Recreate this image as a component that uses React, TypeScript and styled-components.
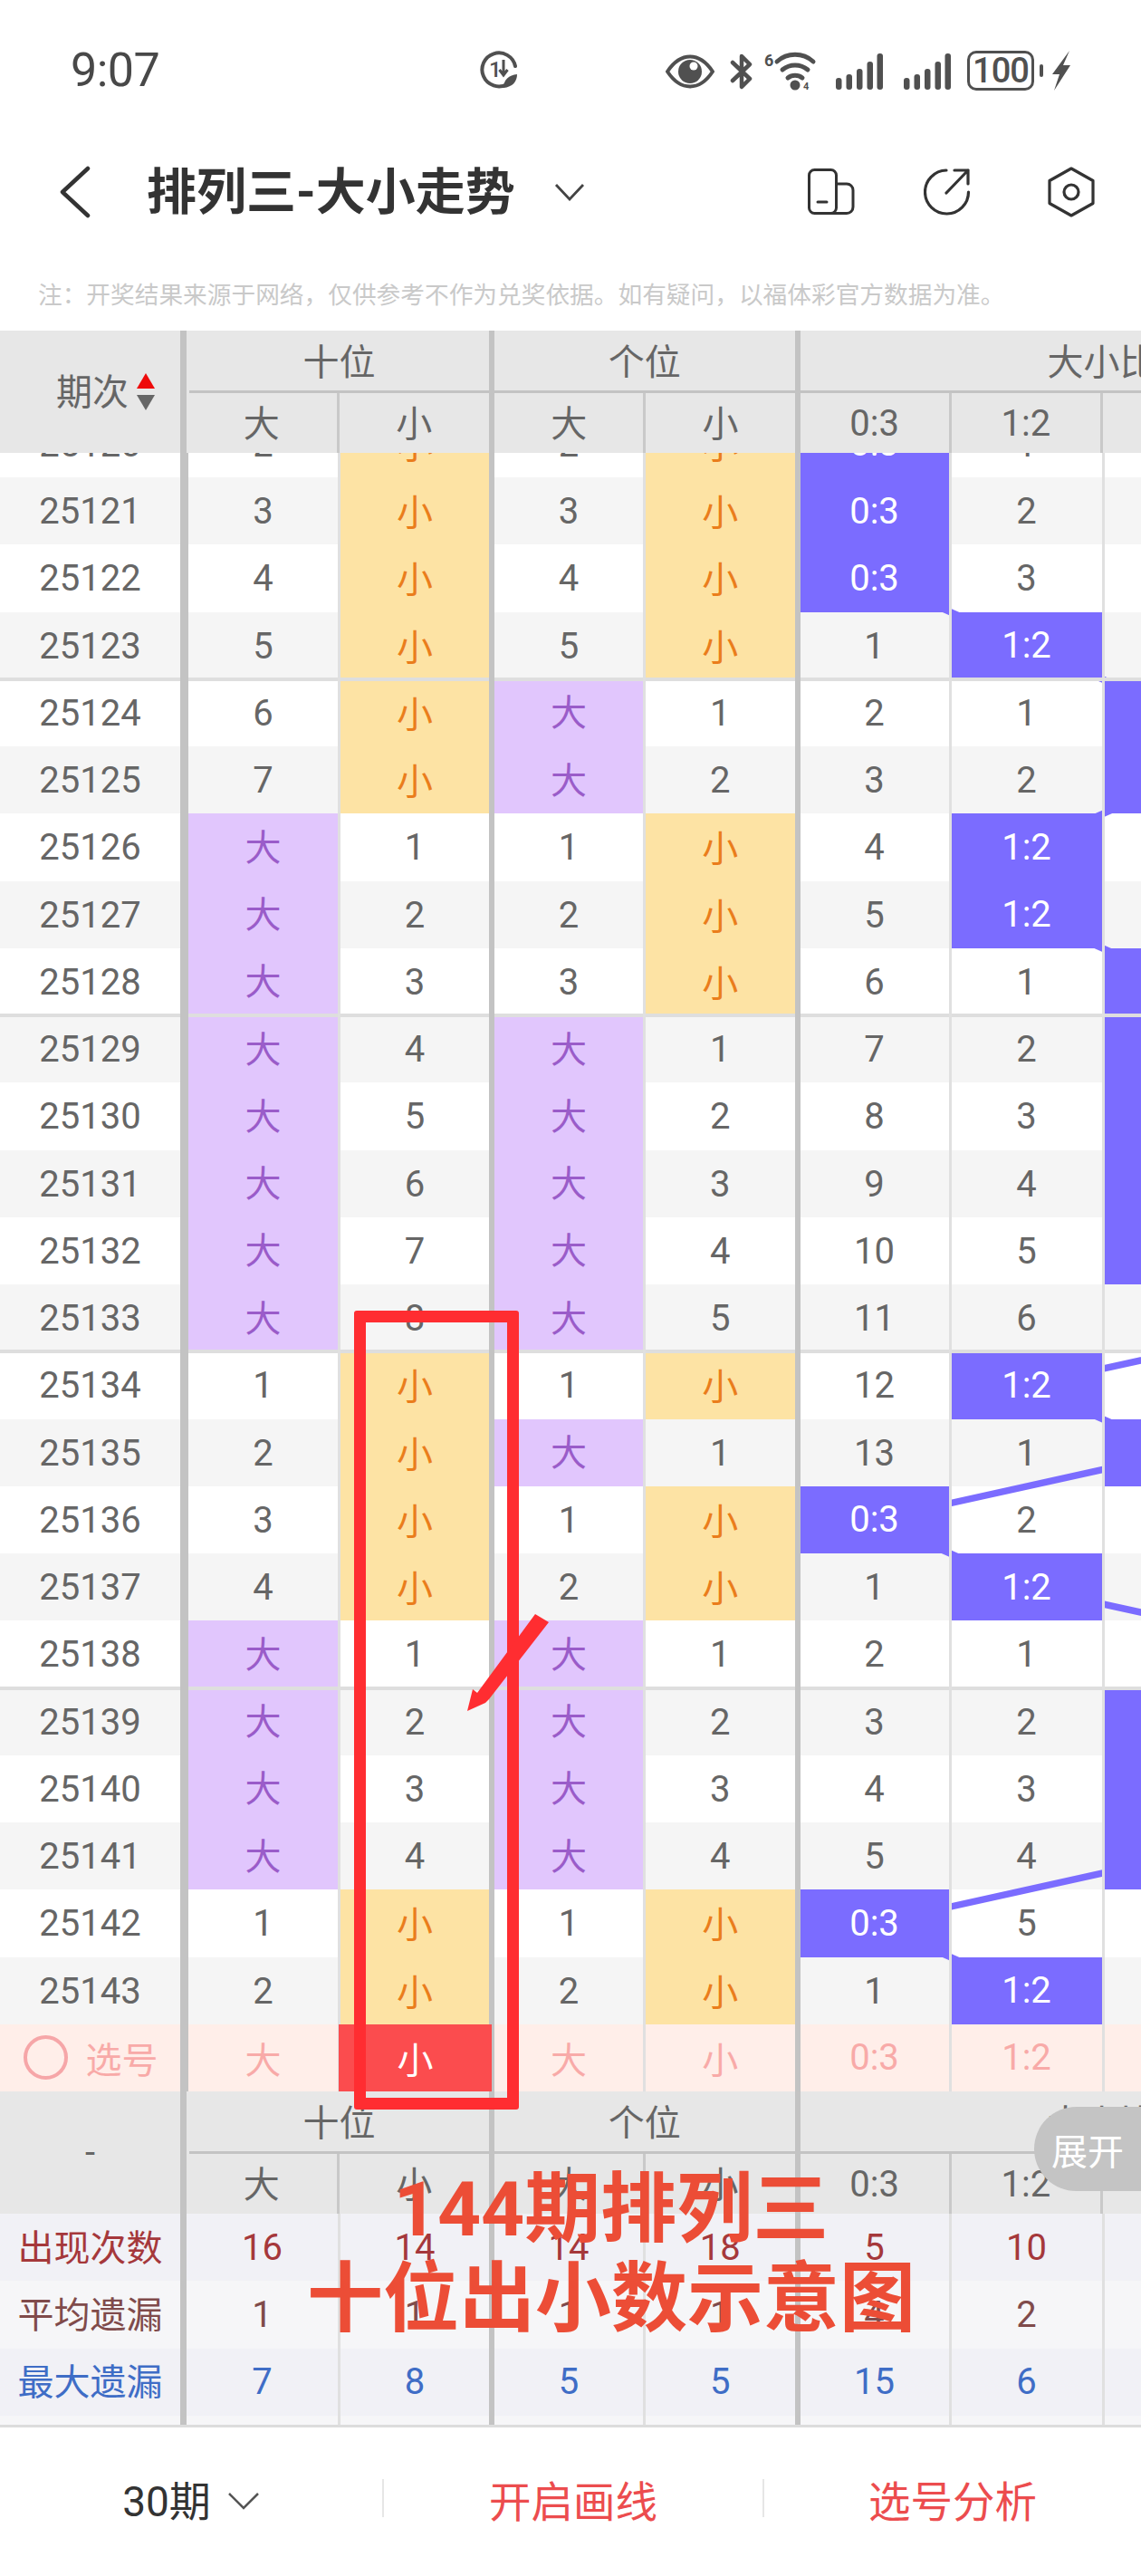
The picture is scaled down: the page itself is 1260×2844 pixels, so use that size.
import React from 'react';
import styled, { createGlobalStyle, css } from 'styled-components';

const GlobalStyle = createGlobalStyle`
  html, body { margin: 0; padding: 0; background: #fff; }
  body { font-family: Roboto, "Noto Sans CJK SC", sans-serif; }
  * { box-sizing: border-box; }
`;

const ROW_H = 74.25;
const BODY_COLS = '208px 168px 170px 167px 170.5px 167px 169px 169px 169px';
const STAT_COLS = '206px 170px 170px 167px 170.5px 167px 169px 169px 169px';
const THICK = '#c3c3c3';
const THIN_HEAD = '#c9c9c9';
const THIN_BODY = '#e0e0e0';
const HEAD_BG = '#e7e7e7';
const RATIO_X = [965.5, 1133.5, 1302, 1471];

const Page = styled.div`
  position: relative;
  width: 1260px;
  height: 2844px;
  overflow: hidden;
  background: #fff;
  display: flex;
  flex-direction: column;
`;

/* ---------- status bar ---------- */
const StatusBar = styled.div`
  height: 130px;
  flex: none;
  padding: 56px 0 0 78px;
  display: flex;
  align-items: flex-start;
  color: #505050;
`;
const Time = styled.div`
  width: 102px;
  font-size: 52px;
  line-height: 44px;
  letter-spacing: -0.5px;
  color: #484848;
`;
const CenterGlyph = styled.div`
  margin-left: 350px;
  width: 42px;
  height: 42px;
`;
const StatusRight = styled.div`
  margin-left: 163px;
  display: flex;
  align-items: flex-start;
`;
const StatusSvg = styled.svg<{ $ml?: number; $mt?: number }>`
  display: block;
  flex: none;
  margin-left: ${(p) => p.$ml ?? 0}px;
  margin-top: ${(p) => p.$mt ?? 0}px;
`;
const Battery = styled.div`
  margin-left: 18px;
  width: 74px;
  height: 44px;
  border: 3.5px solid #505050;
  border-radius: 10px;
  display: flex;
  align-items: center;
  justify-content: center;
  font-size: 38px;
  font-weight: 500;
  letter-spacing: -1px;
  color: #505050;
`;
const BatteryNub = styled.div`
  margin: 15px 0 0 6px;
  width: 4px;
  height: 14px;
  border-radius: 2px;
  background: #505050;
`;

/* ---------- nav bar ---------- */
const NavBar = styled.div`
  height: 160px;
  flex: none;
  display: flex;
  align-items: center;
  padding: 4px 0 0 66px;
`;
const NavTitle = styled.div`
  margin-left: 62px;
  font-size: 55px;
  font-weight: 700;
  line-height: 70px;
  color: #333;
  white-space: nowrap;
`;
const NavSvg = styled.svg<{ $ml: number }>`
  display: block;
  flex: none;
  margin-left: ${(p) => p.$ml}px;
`;

const Note = styled.div`
  height: 75px;
  flex: none;
  padding-left: 42px;
  font-size: 26.7px;
  line-height: 72px;
  color: #c9c9c9;
  white-space: nowrap;
`;

/* ---------- column headers (used above and below the rows) ---------- */
const HeadBand = styled.div`
  height: 135px;
  flex: none;
  display: flex;
  background: ${HEAD_BG};
  color: #666;
  font-size: 40px;
`;
const HeadLabel = styled.div<{ $centered?: boolean }>`
  flex: none;
  width: 206px;
  border-right: 7px solid ${THICK};
  display: flex;
  align-items: center;
  justify-content: ${(p) => (p.$centered ? 'center' : 'flex-start')};
  padding-left: ${(p) => (p.$centered ? 0 : 62)}px;
  padding-bottom: ${(p) => (p.$centered ? 0 : 6)}px;
  gap: 9px;
`;
const SortIcon = styled.svg`
  display: block;
  margin-top: 6px;
`;
const Group = styled.div<{ $w: number }>`
  flex: none;
  width: ${(p) => p.$w}px;
  border-right: 6.5px solid ${THICK};
  display: flex;
  flex-direction: column;
`;
const GroupTitle = styled.div<{ $inset?: boolean }>`
  height: 69px;
  flex: none;
  display: flex;
  align-items: center;
  justify-content: center;
  padding-bottom: 3px;
  border-bottom: 3.5px solid ${THICK};
  margin-left: ${(p) => (p.$inset ? 3 : 0)}px;
`;
const SubRow = styled.div`
  flex: 1;
  display: flex;
`;
const SubCell = styled.div<{ $cjk?: boolean }>`
  flex: 1;
  display: flex;
  align-items: center;
  justify-content: center;
  padding-bottom: ${(p) => (p.$cjk ? 5 : 0)}px;
  border-right: 3px solid ${THIN_HEAD};
  &:last-child { border-right: 0; }
`;

/* ---------- rows ---------- */
const Viewport = styled.div`
  flex: none;
  height: 1809px;
  overflow: hidden;
  display: flex;
  flex-direction: column;
  justify-content: flex-end;
`;
const RowsArea = styled.div`
  position: relative;
  flex: none;
`;
const TrendSvg = styled.svg`
  position: absolute;
  left: 0;
  top: 0;
  z-index: 1;
`;
const Row = styled.div<{ $gray?: boolean; $select?: boolean }>`
  display: grid;
  grid-template-columns: ${BODY_COLS};
  height: ${ROW_H}px;
  background: ${(p) => (p.$select ? '#ffeee9' : p.$gray ? '#f5f5f5' : '#fff')};
`;
type Tone = 'plain' | 'big' | 'small' | 'ratio' | 'pick' | 'picked';
const toneStyles: Record<Tone, ReturnType<typeof css>> = {
  plain: css`color: #666; padding-top: 1px;`,
  big: css`background: #e1c6fd; color: #9a5cc9; padding-bottom: 5px;`,
  small: css`background: #fde3a4; color: #ea7d1c; padding-bottom: 2px;`,
  ratio: css`background: #7b6cff; color: #fff;`,
  pick: css`color: #f8aaa8;`,
  picked: css`background: #fb4c4e; color: #fff; margin-left: -2px; border-right-width: 3px;`,
};
const Cell = styled.div<{ $tone: Tone; $div: number; $divColor: string; $sep?: boolean }>`
  position: relative;
  z-index: ${(p) => (p.$sep ? 3 : 2)};
  display: flex;
  align-items: center;
  justify-content: center;
  font-size: 40px;
  font-weight: 400;
  background-clip: padding-box;
  border-right: ${(p) => p.$div}px solid ${(p) => p.$divColor};
  ${(p) => toneStyles[p.$tone]}
  ${(p) =>
    p.$sep &&
    css`
      &::after {
        content: '';
        position: absolute;
        left: 0;
        right: 0;
        bottom: -2px;
        height: 4px;
        background: #dedede;
      }
    `}
`;
const PickLabel = styled.div`
  display: flex;
  align-items: center;
  gap: 20px;
  margin-left: 1px;
  color: #f8aaa8;
`;
const PickCircle = styled.span`
  display: block;
  width: 49px;
  height: 49px;
  border: 4px solid #f6a6a8;
  border-radius: 50%;
`;

/* ---------- statistics ---------- */
const StatsBlock = styled.div`
  flex: none;
  border-bottom: 3px solid #dcdcdc;
`;
const StatRow = styled.div<{ $bg: string; $h: number; $color: string }>`
  display: grid;
  grid-template-columns: ${STAT_COLS};
  height: ${(p) => p.$h}px;
  background: ${(p) => p.$bg};
  color: ${(p) => p.$color};
  font-size: 40px;
`;
const StatCell = styled.div<{ $div: number; $divColor: string; $cjk?: boolean }>`
  display: flex;
  align-items: center;
  justify-content: center;
  padding-bottom: ${(p) => (p.$cjk ? 5 : 0)}px;
  border-right: ${(p) => p.$div}px solid ${(p) => p.$divColor};
`;

/* ---------- bottom bar ---------- */
const BottomBar = styled.div`
  flex: 1;
  display: grid;
  grid-template-columns: 422px 420px 418px;
  align-items: center;
  padding-bottom: 8px;
  font-size: 46.5px;
`;
const BarItem = styled.div<{ $red?: boolean; $line?: boolean }>`
  height: 42px;
  display: flex;
  align-items: center;
  justify-content: center;
  color: ${(p) => (p.$red ? '#ec4c4e' : '#333')};
  border-left: ${(p) => (p.$line ? '2px solid #e6e6e6' : '0')};
  gap: 18px;
`;
const PeriodText = styled.span`
  font-size: 46px;
`;
const PeriodChevron = styled.svg`
  margin-top: 6px;
`;

/* ---------- overlays ---------- */
const ExpandPill = styled.div`
  position: absolute;
  right: 0;
  top: 2326px;
  width: 118px;
  height: 93px;
  border-radius: 47px 0 0 47px;
  background: #c4c4c4;
  color: #fff;
  font-size: 40px;
  display: flex;
  align-items: center;
  padding-left: 19px;
  z-index: 5;
`;
const RedFrame = styled.div`
  position: absolute;
  left: 391px;
  top: 1447px;
  width: 182px;
  height: 882px;
  border: 13px solid #ff2d31;
  border-radius: 3px;
  z-index: 6;
`;
const RedArrow = styled.svg`
  position: absolute;
  left: 510px;
  top: 1778px;
  z-index: 7;
`;
const Caption = styled.div`
  position: absolute;
  left: 275px;
  top: 2390px;
  width: 800px;
  text-align: center;
  font-size: 84px;
  line-height: 99px;
  font-weight: 700;
  color: #ec4d36;
  z-index: 8;
`;

/* ---------- data ---------- */
type BS = 'B' | 'S';
const tens = 'SSSSSSBBBBBBBBSSSSBBBBSS'.split('') as BS[];
const ones = 'SSSSBBSSSBBBBBSBSSBBBBSS'.split('') as BS[];
const ratio = [0, 0, 0, 1, 2, 2, 1, 1, 2, 2, 2, 2, 2, 3, 1, 2, 0, 1, 3, 2, 2, 2, 0, 1];
const RATIO_LABEL = ['0:3', '1:2', '2:1', '3:0'];

const missSeries = (hit: boolean[], start: number) => {
  let n = start;
  return hit.map((h) => {
    if (h) {
      n = 0;
      return 0;
    }
    n += 1;
    return n;
  });
};

const tenBig = missSeries(tens.map((x) => x === 'B'), 1);
const tenSmall = missSeries(tens.map((x) => x === 'S'), 0);
const oneBig = missSeries(ones.map((x) => x === 'B'), 1);
const oneSmall = missSeries(ones.map((x) => x === 'S'), 0);
const ratioMiss = [0, 1, 2, 3].map((c) => missSeries(ratio.map((r) => r === c), 0));

const COL_DIV: Array<[number, string]> = [
  [3, THIN_BODY],
  [6, THICK],
  [3, THIN_BODY],
  [6.5, THICK],
  [3, THIN_BODY],
  [3, THIN_BODY],
  [3, THIN_BODY],
  [3, THIN_BODY],
];

const stats = [
  { label: '出现次数', color: '#a5383b', bg: '#f1f1f6', values: ['16', '14', '14', '18', '5', '10', '', ''] },
  { label: '平均遗漏', color: '#804b4b', bg: '#f6f6f8', values: ['1', '1', '1', '1', '4', '2', '', ''] },
  { label: '最大遗漏', color: '#3f6dc6', bg: '#f1f1f6', values: ['7', '8', '5', '5', '15', '6', '', ''] },
];

const Header: React.FC<{ label: React.ReactNode; centered?: boolean }> = ({ label, centered }) => (
  <HeadBand>
    <HeadLabel $centered={centered}>{label}</HeadLabel>
    <Group $w={340}>
      <GroupTitle $inset>十位</GroupTitle>
      <SubRow>
        <SubCell $cjk>大</SubCell>
        <SubCell $cjk>小</SubCell>
      </SubRow>
    </Group>
    <Group $w={337.5}>
      <GroupTitle>个位</GroupTitle>
      <SubRow>
        <SubCell $cjk>大</SubCell>
        <SubCell $cjk>小</SubCell>
      </SubRow>
    </Group>
    <Group $w={672}>
      <GroupTitle>大小比</GroupTitle>
      <SubRow>
        {RATIO_LABEL.map((l) => (
          <SubCell key={l}>{l}</SubCell>
        ))}
      </SubRow>
    </Group>
  </HeadBand>
);

export default function App() {
  const linePoints = ratio
    .map((r, i) => `${RATIO_X[r]},${i * ROW_H + ROW_H / 2}`)
    .join(' ');

  return (
    <Page>
      <GlobalStyle />
      <StatusBar>
        <Time>9:07</Time>
        <CenterGlyph>
          <svg width="42" height="42" viewBox="0 0 42 42" fill="none">
            <path d="M30 37 A18.500 18.500 0 1 1 39 17" stroke="#505050" strokeWidth="4" strokeLinecap="round" />
            <text x="10" y="29" fontSize="24" fontWeight="500" fill="#505050" fontFamily="Roboto">1</text>
            <path d="M26 10 V26 M21.500 21 L26 27 L30.500 21" stroke="#505050" strokeWidth="3" />
            <path d="M26 41 C26 32 32 27 41 26 C41 34 36 40 26 41Z" fill="#505050" />
          </svg>
        </CenterGlyph>
        <StatusRight>
          <StatusSvg width="54" height="38" viewBox="0 0 54 38" $mt={4} fill="none">
            <path d="M2 19 C10 7 18 2.500 27 2.500 C36 2.500 44 7 52 19 C44 31 36 35.500 27 35.500 C18 35.500 10 31 2 19Z" stroke="#505050" strokeWidth="4" />
            <circle cx="27" cy="19" r="13" fill="#505050" />
            <circle cx="31" cy="13" r="4.500" fill="#fff" />
          </StatusSvg>
          <StatusSvg width="26" height="42" viewBox="0 0 26 42" $ml={17} $mt={2} fill="none">
            <path d="M3 11 L22 29 L13 38 L13 4 L22 13 L3 31" stroke="#505050" strokeWidth="4.500" strokeLinejoin="round" strokeLinecap="round" />
          </StatusSvg>
          <StatusSvg width="58" height="44" viewBox="0 0 58 44" $ml={12} fill="none">
            <text x="0" y="17" fontSize="18" fontWeight="700" fill="#505050" fontFamily="Roboto">6</text>
            <path d="M14 12 A30 30 0 0 1 54 12" stroke="#505050" strokeWidth="5" strokeLinecap="round" />
            <path d="M20 21 A22 22 0 0 1 48 21" stroke="#505050" strokeWidth="5" strokeLinecap="round" />
            <path d="M26 30 A13 13 0 0 1 42 30" stroke="#505050" strokeWidth="5" strokeLinecap="round" />
            <circle cx="34" cy="38" r="5.500" fill="#505050" />
            <text x="43" y="43" fontSize="11" fontWeight="700" fill="#505050" fontFamily="Roboto">4</text>
          </StatusSvg>
          {[21, 23].map((ml) => (
            <StatusSvg key={ml} width="52" height="42" viewBox="0 0 52 42" $ml={ml} $mt={2} fill="#505050">
              <rect x="0" y="28" width="6.500" height="13" rx="3" />
              <rect x="11.500" y="24" width="6.500" height="17" rx="3" />
              <rect x="23" y="18" width="6.500" height="23" rx="3" />
              <rect x="34.500" y="10" width="6.500" height="31" rx="3" />
              <rect x="45.500" y="1" width="6.500" height="40" rx="3" />
            </StatusSvg>
          ))}
          <Battery>100</Battery>
          <BatteryNub />
          <StatusSvg width="20" height="44" viewBox="0 0 20 44" $ml={10} fill="#505050">
            <path d="M19 0 L0 26 H8 L2 44 L20 16 H12 Z" />
          </StatusSvg>
        </StatusRight>
      </StatusBar>

      <NavBar>
        <svg width="34" height="58" viewBox="0 0 34 58" fill="none">
          <path d="M31 3 L3 29 L31 55" stroke="#333" strokeWidth="4.500" strokeLinecap="round" strokeLinejoin="round" />
        </svg>
        <NavTitle>排列三-大小走势</NavTitle>
        <NavSvg width="34" height="20" viewBox="0 0 34 20" $ml={43.5} fill="none">
          <path d="M2 2 L17 18 L32 2" stroke="#444" strokeWidth="2.800" />
        </NavSvg>
        <NavSvg width="52" height="52" viewBox="0 0 52 52" $ml={246} fill="none" stroke="#333" strokeWidth="3">
          <rect x="1.500" y="1.500" width="30" height="48" rx="6" />
          <path d="M31.500 17 H43 A7 7 0 0 1 50 24 V42.500 A7 7 0 0 1 43 49.500 H25" />
          <path d="M11 37 H21" strokeLinecap="round" />
        </NavSvg>
        <NavSvg width="52" height="52" viewBox="0 0 52 52" $ml={76} fill="none" stroke="#333" strokeWidth="3.200" strokeLinecap="round" strokeLinejoin="round">
          <path d="M25 2 A24 24 0 1 0 49.500 26" />
          <path d="M25 27 L49 2 M34 2 H49 V17" />
        </NavSvg>
        <NavSvg width="52" height="56" viewBox="0 0 52 56" $ml={85} fill="none" stroke="#333" strokeWidth="3.200" strokeLinejoin="round">
          <path d="M26 2 L50 15.500 V40.500 L26 54 L2 40.500 V15.500 Z" />
          <circle cx="26" cy="28" r="8" />
        </NavSvg>
      </NavBar>

      <Note>注：开奖结果来源于网络，仅供参考不作为兑奖依据。如有疑问，以福体彩官方数据为准。</Note>

      <Header
        label={
          <>
            期次
            <SortIcon width="20" height="42" viewBox="0 0 20 42">
              <path d="M10 0 L20 17 H0 Z" fill="#ee0a0a" />
              <path d="M0 24 H20 L10 41 Z" fill="#666" />
            </SortIcon>
          </>
        }
      />

      <Viewport>
        <RowsArea>
          <TrendSvg width="1600" height={ratio.length * ROW_H} viewBox={`0 0 1600 ${ratio.length * ROW_H}`} fill="none">
            <polyline points={linePoints} stroke="#7b6cff" strokeWidth="7.5" />
          </TrendSvg>
          {ratio.map((r, i) => {
            const issue = 25120 + i;
            const sep = i < ratio.length - 1 && (issue - 25123) % 5 === 0;
            const gray = issue % 2 === 1;
            const cells: Array<{ text: string | number; tone: Tone }> = [
              tens[i] === 'B' ? { text: '大', tone: 'big' } : { text: tenBig[i], tone: 'plain' },
              tens[i] === 'S' ? { text: '小', tone: 'small' } : { text: tenSmall[i], tone: 'plain' },
              ones[i] === 'B' ? { text: '大', tone: 'big' } : { text: oneBig[i], tone: 'plain' },
              ones[i] === 'S' ? { text: '小', tone: 'small' } : { text: oneSmall[i], tone: 'plain' },
              ...RATIO_LABEL.map((l, c) =>
                r === c ? { text: l, tone: 'ratio' as Tone } : { text: ratioMiss[c][i], tone: 'plain' as Tone }
              ),
            ];
            return (
              <Row key={issue} $gray={gray}>
                <Cell $tone="plain" $div={9} $divColor={THICK} $sep={sep}>{issue}</Cell>
                {cells.map((c, k) => (
                  <Cell key={k} $tone={c.tone} $div={COL_DIV[k][0]} $divColor={COL_DIV[k][1]} $sep={sep}>
                    {c.text}
                  </Cell>
                ))}
              </Row>
            );
          })}
          <Row $select>
            <Cell $tone="pick" $div={9} $divColor={THICK}>
              <PickLabel>
                <PickCircle />
                选号
              </PickLabel>
            </Cell>
            {['大', '小', '大', '小', ...RATIO_LABEL].map((t, k) => (
              <Cell key={k} $tone={k === 1 ? 'picked' : 'pick'} $div={COL_DIV[k][0]} $divColor={COL_DIV[k][1]}>
                {t}
              </Cell>
            ))}
          </Row>
        </RowsArea>
      </Viewport>

      <StatsBlock>
        <Header label="-" centered />
        {stats.map((s) => (
          <StatRow key={s.label} $bg={s.bg} $h={ROW_H} $color={s.color}>
            <StatCell $div={7} $divColor={THICK} $cjk>{s.label}</StatCell>
            {s.values.map((v, k) => (
              <StatCell key={k} $div={COL_DIV[k][0]} $divColor={COL_DIV[k][1]}>{v}</StatCell>
            ))}
          </StatRow>
        ))}
        <StatRow $bg="#f6f6f8" $h={10.25} $color="#666">
          <StatCell $div={7} $divColor={THICK} />
          {COL_DIV.map((d, k) => (
            <StatCell key={k} $div={d[0]} $divColor={d[1]} />
          ))}
        </StatRow>
      </StatsBlock>

      <BottomBar>
        <BarItem>
          <PeriodText>30期</PeriodText>
          <PeriodChevron width="36" height="20" viewBox="0 0 36 20" fill="none">
            <path d="M2 2 L18 18 L34 2" stroke="#555" strokeWidth="2.500" />
          </PeriodChevron>
        </BarItem>
        <BarItem $red $line>开启画线</BarItem>
        <BarItem $red $line>选号分析</BarItem>
      </BottomBar>

      <ExpandPill>展开</ExpandPill>
      <RedFrame />
      <RedArrow width="100" height="115" viewBox="0 0 100 115" fill="#ff2d31">
        <path d="M81 4 L96 13 L30 98 L26 102 L6 111 L12 87 L17 91 Z" />
      </RedArrow>
      <Caption>
        144期排列三
        <br />
        十位出小数示意图
      </Caption>
    </Page>
  );
}
